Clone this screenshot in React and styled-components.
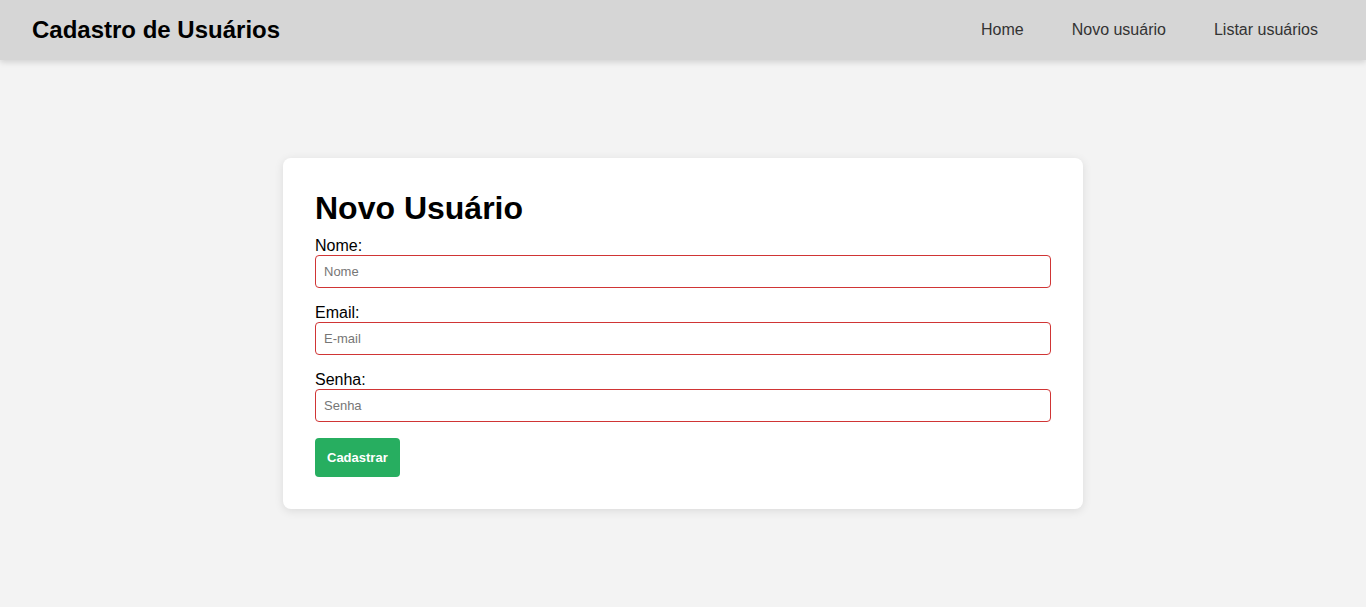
import React from "react";
import styled, { createGlobalStyle } from "styled-components";

const Global = createGlobalStyle`
  * { box-sizing: border-box; }
  html, body { margin: 0; padding: 0; }
  body {
    font-family: "Liberation Sans", Arial, sans-serif;
    background: #f3f3f3;
    color: #000;
  }
`;

const Page = styled.div`
  min-height: 607px;
  display: flex;
  flex-direction: column;
`;

const Header = styled.header`
  height: 60px;
  flex: 0 0 60px;
  background: #d6d6d6;
  box-shadow: 0 2px 6px rgba(0, 0, 0, 0.15);
  display: flex;
  align-items: center;
  justify-content: space-between;
  padding: 0 48px 0 32px;
  position: relative;
  z-index: 1;
`;

const Brand = styled.h1`
  margin: 0;
  font-size: 24px;
  font-weight: bold;
`;

const Nav = styled.nav`
  display: flex;
  gap: 48px;
`;

const NavLink = styled.a`
  font-size: 16px;
  color: #333;
  text-decoration: none;
`;

const Main = styled.main`
  flex: 1;
  display: flex;
  align-items: center;
  justify-content: center;
`;

const Card = styled.form`
  width: 800px;
  background: #fff;
  border-radius: 8px;
  box-shadow: 0 2px 10px rgba(0, 0, 0, 0.1);
  padding: 32px;
  display: flex;
  flex-direction: column;
  align-items: flex-start;
`;

const Title = styled.h2`
  margin: 0 0 10px;
  font-size: 32px;
  font-weight: bold;
  line-height: 37px;
`;

const Field = styled.div`
  width: 100%;
  display: flex;
  flex-direction: column;
  margin-bottom: 16px;
`;

const Label = styled.label`
  font-size: 16px;
  line-height: 18px;
`;

const Input = styled.input`
  width: 100%;
  height: 33px;
  border: 1px solid #d03535;
  border-radius: 4px;
  padding: 0 8px;
  font-family: "Liberation Sans", Arial, sans-serif;
  font-size: 13px;
  outline: none;
  &::placeholder { color: #767676; }
`;

const Button = styled.button`
  height: 39px;
  padding: 0 12px;
  border: none;
  border-radius: 4px;
  background: #27ae60;
  color: #fff;
  font-family: "Liberation Sans", Arial, sans-serif;
  font-size: 13px;
  font-weight: bold;
  cursor: pointer;
`;

const fields = [
  { id: "nome", label: "Nome:", placeholder: "Nome", type: "text" },
  { id: "email", label: "Email:", placeholder: "E-mail", type: "email" },
  { id: "senha", label: "Senha:", placeholder: "Senha", type: "password" },
];

export default function App() {
  return (
    <Page>
      <Global />
      <Header>
        <Brand>Cadastro de Usuários</Brand>
        <Nav>
          <NavLink href="#">Home</NavLink>
          <NavLink href="#">Novo usuário</NavLink>
          <NavLink href="#">Listar usuários</NavLink>
        </Nav>
      </Header>
      <Main>
        <Card onSubmit={(e) => e.preventDefault()}>
          <Title>Novo Usuário</Title>
          {fields.map((f) => (
            <Field key={f.id}>
              <Label htmlFor={f.id}>{f.label}</Label>
              <Input id={f.id} type={f.type} placeholder={f.placeholder} />
            </Field>
          ))}
          <Button type="submit">Cadastrar</Button>
        </Card>
      </Main>
    </Page>
  );
}
